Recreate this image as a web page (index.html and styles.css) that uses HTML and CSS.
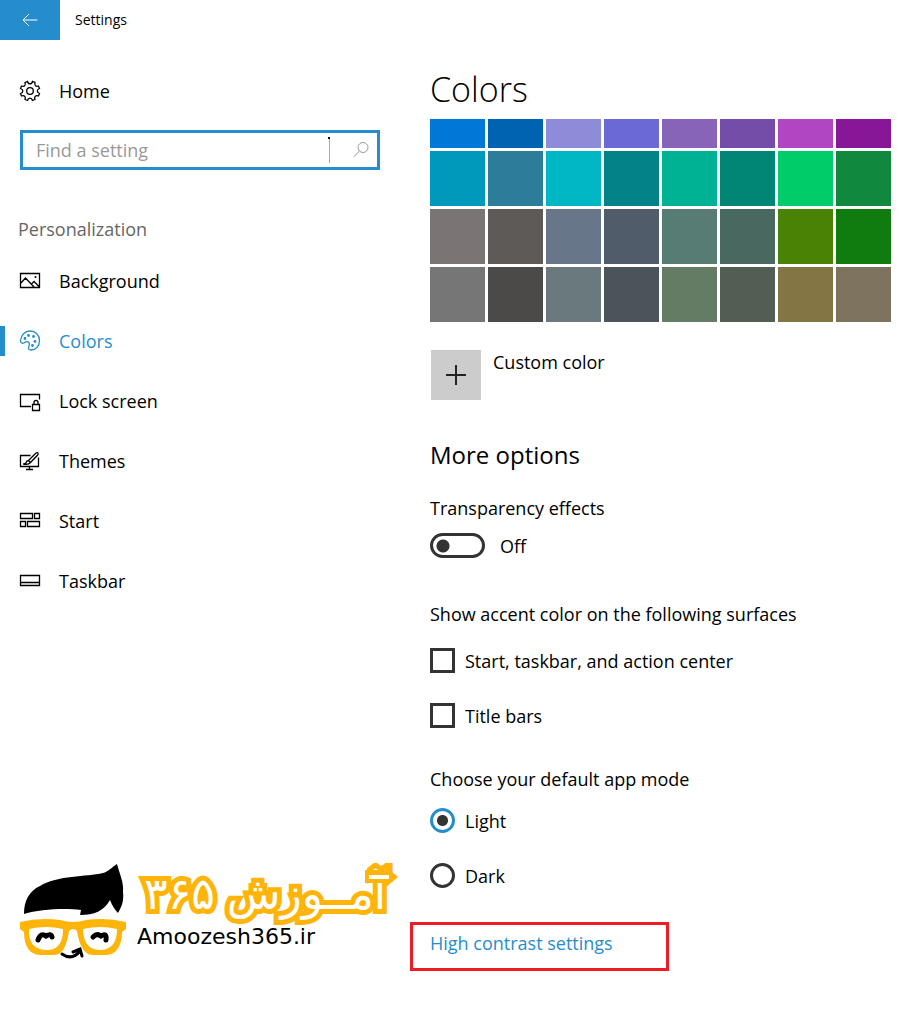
FILE: index.html
```html
<!DOCTYPE html>
<html lang="en">
<head>
    <meta charset="UTF-8">
    <meta name="viewport" content="width=device-width, initial-scale=1.0">
    <title>Settings</title>
    <link rel="stylesheet" href="styles.css">
</head>
<body>
    <header class="title-bar">
        <button class="back" type="button" aria-label="Back">
            <svg width="16" height="14" viewBox="0 0 16 14"><path d="M15.5 7H1M7 1L1 7l6 6"/></svg>
        </button>
        <span class="title">Settings</span>
    </header>

    <div class="layout">
        <aside class="sidebar">
            <a class="nav-item" href="#">
                <svg class="icon" viewBox="0 0 22 22"><path d="M8.500 1.500Q9 3.800 11 3.800T13.500 1.500L16 2.500Q15.300 4.600 16.500 5.700T19.500 6L20.500 8.500Q18.300 9.300 18.300 11T20.500 13.500L19.500 16Q17.500 15.200 16.300 16.300T16 19.500L13.500 20.500Q12.800 18.200 11 18.200T8.500 20.500L6 19.500Q6.800 17.400 5.700 16.300T2.500 16L1.500 13.500Q3.800 12.800 3.800 11T1.500 8.500L2.500 6Q4.600 6.800 5.700 5.700T6 2.500Z"/><circle cx="11" cy="11" r="3.3"/></svg>
                Home
            </a>

            <form class="search">
                <input type="text" placeholder="Find a setting" aria-label="Find a setting">
                <span class="marker"></span>
                <button type="button" aria-label="Search">
                    <svg width="18" height="18" viewBox="0 0 18 18"><circle cx="11" cy="6.5" r="5"/><path d="M7.4 10.2L1.5 16"/></svg>
                </button>
            </form>

            <h2 class="group">Personalization</h2>

            <nav>
                <a class="nav-item" href="#">
                    <svg class="icon" viewBox="0 0 22 22"><path d="M1.500 3.500h19v14h-19zM1.500 13.500l5-5.500 9 9.500M12.500 14l2.500-2.500 5.500 5.500"/><circle class="dot" cx="16.500" cy="7" r="1"/></svg>
                    Background
                </a>
                <a class="nav-item active" href="#">
                    <svg class="icon" viewBox="0 0 22 22"><path d="M1.500 10.500C2 5 6 1 11 1c5.500 0 9.500 4 9.500 9.500S17 20 12 20c-2.500 0-3-1.500-2.200-3.500.8-2 .7-3.800-.8-4.600-1.300-.7-2.500.1-3.900.9-1.700.9-3.600.4-3.600-2.300z"/><circle class="dot" cx="6" cy="8.500" r="1.400"/><circle class="dot" cx="9.500" cy="5.500" r="1.400"/><circle class="dot" cx="14.500" cy="6.500" r="1.400"/><circle class="dot" cx="16" cy="11.500" r="1.400"/><circle class="dot" cx="13.500" cy="15.500" r="1.400"/></svg>
                    Colors
                </a>
                <a class="nav-item" href="#">
                    <svg class="icon" viewBox="0 0 22 22"><path d="M12 16.500H1.500v-12h19v5M13.500 14.500h7v6h-7zM15 14.500v-2q0-2 2-2t2 2v2"/></svg>
                    Lock screen
                </a>
                <a class="nav-item" href="#">
                    <svg class="icon" viewBox="0 0 22 22"><path d="M11.500 5.500h-10v11h18v-9M10.500 16.500v3M7 19.500h7M9.500 10.500l7.500-7.500q1.500-.8 2 0t-.3 2L11.500 12.500zM9.500 10.500q-2 .3-2.300 2-.3 1.300-3 1.500 5.500 1 7.300-1.500z"/></svg>
                    Themes
                </a>
                <a class="nav-item" href="#">
                    <svg class="icon" viewBox="0 0 22 22"><path d="M1.500 3.500h12v5h-12zM15.500 3.500h5v5h-5zM1.500 11.500h5v5h-5zM8.500 11.500h12v5h-12z"/></svg>
                    Start
                </a>
                <a class="nav-item" href="#">
                    <svg class="icon" viewBox="0 0 22 22"><path d="M1.500 5.500h19v10h-19zM1.500 12.500h19"/></svg>
                    Taskbar
                </a>
            </nav>

            <svg class="brand" viewBox="0 0 380 98" role="img" aria-label="Amoozesh365.ir">
                <!-- hair -->
                <path d="M4 51C4 38 9 28 20 23C38 12 66 14 83 10C88 9 92 4 97 1C100 12 104 20 103 29C104 38 102 43 98 50Q93 45 90 37C84 48 74 52 60 52L61 47C45 45 20 46 4 51Z"/>
                <!-- glasses -->
                <path class="gold" fill-rule="evenodd" d="M0 59Q20 54 40 57Q53 61 66 57Q86 54 106 59V66L102 69C102 83 96 92 86 92H73C63 92 59 80 57 68Q53 64 49 68C47 80 44 92 34 92H21C10 92 4 84 4 69L0 66ZM9 66C8 79 14 87 27 87C39 87 43 78 43 66Q26 62 9 66ZM63 66C63 78 68 87 80 87C92 87 97 79 97 66Q80 62 63 66Z"/>
                <path class="eye" d="M18 77Q21 69 26 73Q31 70 32 74M73 74Q77 70 81 73Q87 69 86 77"/>
                <path class="smile" d="M42 91Q52 98 60 88M53 89l7-3 2 7"/>
                <text class="word" x="195" y="46">۳۶۵</text>
                <text class="word" x="366" y="46">آمــوزش</text>
                <!-- arrow on the first letter -->
                <path class="gold" d="M345 7h20V3l13 11-13 11v-5h-20z"/>
                <path class="arrow" d="M349 14h20"/>
                <text class="site" x="117" y="81">Amoozesh365.ir</text>
            </svg>
        </aside>

        <main class="content">
            <h1>Colors</h1>
            <div class="swatches" id="swatches"></div>

            <div class="custom">
                <button type="button" id="customColor"><svg width="20" height="20" viewBox="0 0 20 20"><path d="M10 0v20M0 10h20"/></svg></button>
                <label for="customColor">Custom color</label>
            </div>

            <h2>More options</h2>

            <label class="caption" for="transparency">Transparency effects</label>
            <div class="toggle-row">
                <input class="toggle" type="checkbox" role="switch" id="transparency">
                <span>Off</span>
            </div>

            <fieldset class="surfaces">
                <legend>Show accent color on the following surfaces</legend>
                <label class="option"><input type="checkbox"> Start, taskbar, and action center</label>
                <label class="option"><input type="checkbox"> Title bars</label>
            </fieldset>

            <fieldset class="mode">
                <legend>Choose your default app mode</legend>
                <label class="option"><input type="radio" name="mode" checked> Light</label>
                <label class="option"><input type="radio" name="mode"> Dark</label>
            </fieldset>

            <div class="highlight">
                <a href="#">High contrast settings</a>
            </div>
        </main>
    </div>

    <script>
        const colors = [
            '#0078d7', '#0063b1', '#8e8cd8', '#6b69d6', '#8764b8', '#744da9', '#b146c2', '#881798',
            '#0099bc', '#2d7d9a', '#00b7c3', '#038387', '#00b294', '#018574', '#00cc6a', '#10893e',
            '#7a7574', '#5d5a58', '#68768a', '#515c6b', '#567c73', '#486860', '#498205', '#107c10',
            '#767676', '#4c4a48', '#69797e', '#4a5459', '#647c64', '#525e54', '#847545', '#7e735f'
        ];
        document.getElementById('swatches').innerHTML = colors.map(color =>
            `<button type="button" aria-label="${color}" style="background-color: ${color}"></button>`
        ).join('');
    </script>
</body>
</html>
```
FILE: styles.css
```css
* {
    margin: 0;
    padding: 0;
    box-sizing: border-box;
}

body {
    min-height: 100vh;
    background-color: white;
    color: black;
    font-family: "Open Sans", "Noto Sans", sans-serif;
    font-size: 18px;
    line-height: 24px;
}

button {
    border: none;
    cursor: pointer;
}

button,
input {
    font: inherit;
}

svg {
    fill: none;
    stroke: currentColor;
}

a {
    color: #268dcd;
    text-decoration: none;
}

.title-bar {
    display: flex;
    align-items: center;
    gap: 15px;
    height: 40px;
}

.back {
    display: flex;
    align-items: center;
    justify-content: center;
    width: 60px;
    height: 40px;
    background-color: #268dcd;
    color: white;
}

.title {
    font-size: 14px;
}

.layout {
    display: grid;
    grid-template-columns: 410px 1fr;
}

.sidebar {
    padding-top: 21px;
}

.nav-item {
    display: flex;
    align-items: center;
    gap: 18px;
    height: 60px;
    padding-left: 19px;
    color: black;
}

.nav-item.active {
    color: #268dcd;
    background: linear-gradient(#268dcd, #268dcd) no-repeat left center/5px 30px;
}

.icon {
    width: 22px;
    height: 22px;
    stroke-width: 1.3;
}

.dot {
    fill: currentColor;
    stroke: none;
}

.search {
    display: flex;
    align-items: center;
    height: 40px;
    margin: 9px 30px 0 20px;
    border: 3px solid #268dcd;
}

.search input {
    flex: 1;
    min-width: 0;
    height: 24px;
    padding-left: 13px;
    border: none;
    outline: none;
}

.search input::placeholder {
    color: #999;
}

/* divider with a small dark tip */
.marker {
    width: 3px;
    height: 26px;
    background:
        linear-gradient(to bottom left, black 50%, transparent 50%) no-repeat top/3px 3px,
        linear-gradient(#aaa, #aaa) no-repeat right/1px 100%;
}

.search button {
    display: flex;
    justify-content: center;
    width: 47px;
    padding-left: 15px;
    background: none;
    color: #999;
}

.group {
    margin: 47px 0 10px 18px;
    color: #666;
    font-size: 18px;
    font-weight: normal;
}

.brand {
    display: block;
    width: 380px;
    height: 98px;
    margin: 252px 0 0 20px;
    fill: black;
    stroke: none;
}

.gold {
    fill: #ffb40a;
}

.eye,
.smile {
    fill: none;
    stroke: black;
    stroke-width: 5;
    stroke-linecap: round;
}

.smile {
    stroke-width: 3;
}

.word {
    direction: rtl;
    fill: white;
    stroke: #ffb40a;
    stroke-width: 10;
    paint-order: stroke;
    font-family: "DejaVu Sans", sans-serif;
    font-size: 44px;
}

.arrow {
    fill: none;
    stroke: white;
    stroke-width: 4;
}

.site {
    font-family: "DejaVu Sans", sans-serif;
    font-size: 22px;
}

.content {
    padding: 26px 15px 55px 20px;
}

h1 {
    margin-bottom: 7px;
    font-size: 34px;
    font-weight: 300;
    line-height: 46px;
}

/* the first row is scrolled halfway under the heading */
.swatches {
    display: grid;
    grid-template-columns: repeat(8, 55px);
    grid-template-rows: 29px repeat(3, 55px);
    gap: 3px;
}

.custom {
    display: flex;
    gap: 12px;
    margin-top: 28px;
    padding-left: 1px;
}

.custom button {
    display: flex;
    align-items: center;
    justify-content: center;
    width: 50px;
    height: 50px;
    background-color: #ccc;
}

.custom svg {
    stroke: #222;
    stroke-width: 2;
}

.content h2 {
    margin: 39px 0 25px;
    font-size: 24px;
    font-weight: normal;
    line-height: 32px;
}

.caption {
    display: block;
}

.toggle-row {
    display: flex;
    align-items: center;
    gap: 15px;
    margin: 13px 0 44px;
}

.content input {
    flex: none;
    appearance: none;
    width: 25px;
    height: 25px;
    border: 3px solid #333;
    background-color: white;
}

.content .toggle {
    width: 55px;
    border-radius: 13px;
    background: radial-gradient(circle at 10px 10px, #333 6px, transparent 7px);
}

fieldset {
    border: none;
}

.option {
    display: flex;
    align-items: center;
    gap: 10px;
    height: 25px;
    margin-bottom: 30px;
}

legend {
    margin-bottom: 22px;
}

.surfaces {
    margin-bottom: 39px;
}

.mode legend {
    margin-bottom: 17px;
}

.mode {
    margin-bottom: 34px;
}

.option:last-child {
    margin-bottom: 0;
}

.content input[type="radio"] {
    border-radius: 50%;
}

.content input[type="radio"]:checked {
    border-color: #268dcd;
    background: radial-gradient(circle, #333 5px, transparent 6px);
}

.highlight {
    width: 259px;
    height: 49px;
    margin-left: -20px;
    padding: 6px 17px;
    border: 3px solid #ed1c24;
}
```
